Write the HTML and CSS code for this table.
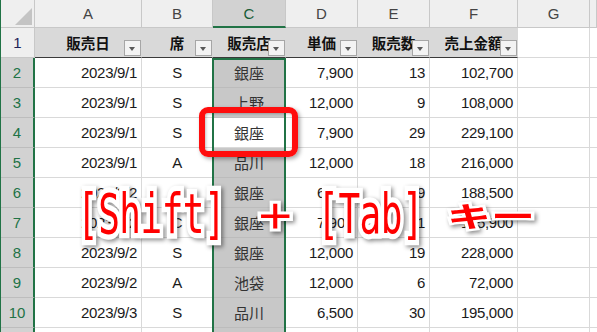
FILE: index.html
```html
<!DOCTYPE html>
<html lang="ja">
<head>
<meta charset="utf-8">
<title>Excel Shift+Tab</title>
<link rel="stylesheet" href="styles.css">
</head>
<body>
<div class="sheet">
  <div class="corner"></div>
  <div class="colhead">A</div>
  <div class="colhead">B</div>
  <div class="colhead sel">C</div>
  <div class="colhead">D</div>
  <div class="colhead">E</div>
  <div class="colhead">F</div>
  <div class="colhead">G</div>
  <div class="colhead"></div>

  <div class="rowhead">1</div>
  <div class="c th">販売日<span class="fbtn"></span></div>
  <div class="c th">席<span class="fbtn"></span></div>
  <div class="c th">販売店<span class="fbtn"></span></div>
  <div class="c th">単価<span class="fbtn"></span></div>
  <div class="c th">販売数<span class="fbtn"></span></div>
  <div class="c th">売上金額<span class="fbtn"></span></div>
  <div class="c"></div>
  <div class="c"></div>

  <div class="rowhead sel">2</div>
  <div class="c num">2023/9/1</div><div class="c ctr">S</div><div class="c ctr jp selcell">銀座</div><div class="c num">7,900</div><div class="c num">13</div><div class="c num">102,700</div><div class="c"></div><div class="c"></div>

  <div class="rowhead sel">3</div>
  <div class="c num">2023/9/1</div><div class="c ctr">S</div><div class="c ctr jp selcell">上野</div><div class="c num">12,000</div><div class="c num">9</div><div class="c num">108,000</div><div class="c"></div><div class="c"></div>

  <div class="rowhead sel">4</div>
  <div class="c num">2023/9/1</div><div class="c ctr">S</div><div class="c ctr jp">銀座</div><div class="c num">7,900</div><div class="c num">29</div><div class="c num">229,100</div><div class="c"></div><div class="c"></div>

  <div class="rowhead sel">5</div>
  <div class="c num">2023/9/1</div><div class="c ctr">A</div><div class="c ctr jp selcell">品川</div><div class="c num">12,000</div><div class="c num">18</div><div class="c num">216,000</div><div class="c"></div><div class="c"></div>

  <div class="rowhead sel">6</div>
  <div class="c num">2023/9/2</div><div class="c ctr">B</div><div class="c ctr jp selcell">銀座</div><div class="c num">6,500</div><div class="c num">29</div><div class="c num">188,500</div><div class="c"></div><div class="c"></div>

  <div class="rowhead sel">7</div>
  <div class="c num">2023/9/2</div><div class="c ctr">C</div><div class="c ctr jp selcell">銀座</div><div class="c num">7,900</div><div class="c num">21</div><div class="c num">165,900</div><div class="c"></div><div class="c"></div>

  <div class="rowhead sel">8</div>
  <div class="c num">2023/9/2</div><div class="c ctr">S</div><div class="c ctr jp selcell">銀座</div><div class="c num">12,000</div><div class="c num">19</div><div class="c num">228,000</div><div class="c"></div><div class="c"></div>

  <div class="rowhead sel">9</div>
  <div class="c num">2023/9/2</div><div class="c ctr">A</div><div class="c ctr jp selcell">池袋</div><div class="c num">12,000</div><div class="c num">6</div><div class="c num">72,000</div><div class="c"></div><div class="c"></div>

  <div class="rowhead sel">10</div>
  <div class="c num">2023/9/3</div><div class="c ctr">S</div><div class="c ctr jp selcell">品川</div><div class="c num">6,500</div><div class="c num">30</div><div class="c num">195,000</div><div class="c"></div><div class="c"></div>

  <div class="rowhead sel">11</div>
  <div class="c num"></div><div class="c ctr"></div><div class="c ctr jp selcell"></div><div class="c num"></div><div class="c num"></div><div class="c num"></div><div class="c"></div><div class="c"></div>

  <div class="selbox"></div>
  <div class="redbox"></div>
</div>

<div class="caption">
  <span class="key">[Shift]</span>
  <span class="plus">＋</span>
  <span class="key key-tab">[Tab]</span>
  <span class="kana">キー</span>
</div>
</body>
</html>
```

FILE: styles.css
```css
html, body {
  margin: 0;
  padding: 0;
  background: #ffffff;
}

body {
  width: 597px;
  height: 332px;
  overflow: hidden;
  position: relative;
}

.sheet {
  display: grid;
  grid-template-columns: 34px 107px 71px 73px 72px 72px 88px 72px 7px;
  grid-template-rows: 28px repeat(11, 30px);
  height: 332px;
  overflow: hidden;
  position: relative;
  border-left: 1px solid #217346;
  font-family: "Liberation Sans", "Noto Sans CJK JP", sans-serif;
  font-size: 15px;
  color: #1a1a1a;
}

.sheet > div {
  box-sizing: border-box;
  min-width: 0;
}

.corner {
  background: #efefef;
  border-right: 1px solid #c8c8c8;
  border-bottom: 1px solid #c8c8c8;
  position: relative;
}

.corner::after {
  content: "";
  position: absolute;
  left: 14px;
  top: 8px;
  width: 17px;
  height: 17px;
  background: #c4c4c4;
  clip-path: polygon(100% 0, 100% 100%, 0 100%);
}

.colhead {
  background: #efefef;
  border-right: 1px solid #c8c8c8;
  border-bottom: 1px solid #c8c8c8;
  display: flex;
  align-items: center;
  justify-content: center;
  color: #444444;
  font-size: 15px;
}

.colhead.sel {
  background: #d2d2d2;
  color: #185c37;
  border-bottom: 2px solid #217346;
}

.rowhead {
  background: #efefef;
  border-right: 1px solid #c8c8c8;
  border-bottom: 1px solid #c8c8c8;
  display: flex;
  align-items: center;
  justify-content: center;
  color: #1f2458;
  font-size: 15px;
}

.rowhead.sel {
  background: #d2d2d2;
  color: #217346;
  border-right: 2px solid #217346;
  border-bottom-color: #bdbdbd;
}

.c {
  border-right: 1px solid #d9d9d9;
  border-bottom: 1px solid #d9d9d9;
  display: flex;
  align-items: center;
  padding: 0 4px;
  white-space: nowrap;
  letter-spacing: -0.3px;
}

.num {
  justify-content: flex-end;
}

.ctr {
  justify-content: center;
}

.jp {
  font-family: "Noto Sans CJK JP", sans-serif;
  letter-spacing: 0;
  color: #333333;
}

.selcell {
  background: #c8c8c8;
  border-bottom-color: #bcbcbc;
}

.th {
  background: #d9d9d9;
  border-right-color: transparent;
  border-bottom: 1px solid #3a3a3a;
  justify-content: center;
  font-family: "Noto Sans CJK JP", sans-serif;
  font-weight: 700;
  font-size: 14.5px;
  letter-spacing: 0;
  color: #111111;
  position: relative;
}

.fbtn {
  position: absolute;
  right: 0;
  bottom: 1px;
  width: 17px;
  height: 16px;
  box-sizing: border-box;
  border: 1px solid #a6a6a6;
  background: #f3f3f3;
}

.fbtn::after {
  content: "";
  position: absolute;
  left: 4px;
  top: 6px;
  width: 0;
  height: 0;
  border-left: 3.5px solid transparent;
  border-right: 3.5px solid transparent;
  border-top: 4px solid #595959;
}

.selbox {
  position: absolute;
  grid-column: 4 / 5;
  grid-row: 3 / 14;
  top: 0;
  bottom: 0;
  left: -1px;
  right: 0;
  border: 2px solid #217346;
  border-bottom: none;
  pointer-events: none;
  z-index: 1;
}

.redbox {
  position: absolute;
  grid-column: 4 / 5;
  grid-row: 5 / 6;
  top: -11px;
  bottom: -9px;
  left: -14px;
  right: -12px;
  border: 6px solid #ff0d0d;
  border-radius: 9px;
  box-shadow: 2px 2px 4px rgba(0, 0, 0, 0.35), inset 1px 1px 3px rgba(0, 0, 0, 0.25);
  z-index: 2;
}

.caption {
  position: absolute;
  left: 77px;
  top: 190px;
  height: 50px;
  display: flex;
  align-items: center;
  z-index: 3;
  color: #ff0000;
  -webkit-text-stroke: 7px #ffffff;
  paint-order: stroke fill;
  filter: drop-shadow(2px 2px 2px rgba(0, 0, 0, 0.45));
  white-space: nowrap;
}

.key {
  font-family: "DejaVu Sans Mono", monospace;
  font-size: 36px;
  letter-spacing: -0.5px;
  line-height: 1;
  transform: scaleY(1.52);
}

.plus {
  font-family: "Noto Sans CJK JP", sans-serif;
  font-weight: 700;
  font-size: 40px;
  line-height: 1;
  margin-left: 30px;
  transform: scaleY(0.85);
}

.key-tab {
  margin-left: 22px;
}

.kana {
  font-family: "Noto Sans CJK JP", sans-serif;
  font-weight: 700;
  font-size: 44px;
  line-height: 1;
  margin-left: 24px;
  transform: scaleY(0.65);
}
```
